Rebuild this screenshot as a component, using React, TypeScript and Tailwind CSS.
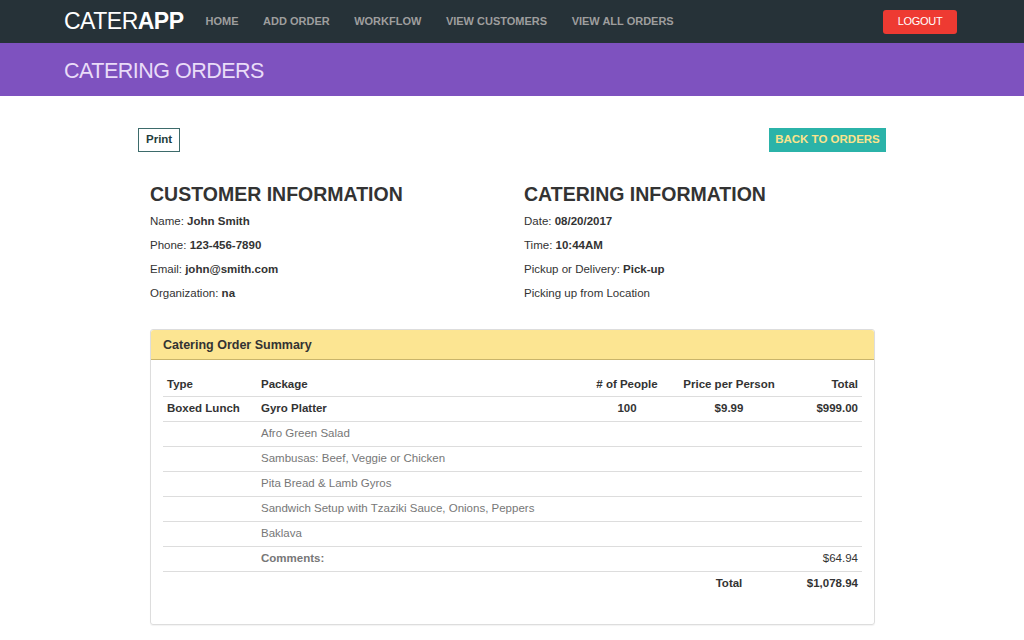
import React from "react";

const items = [
  "Afro Green Salad",
  "Sambusas: Beef, Veggie or Chicken",
  "Pita Bread & Lamb Gyros",
  "Sandwich Setup with Tzaziki Sauce, Onions, Peppers",
  "Baklava",
];

export default function App() {
  return (
    <div className="min-h-[640px] bg-white text-[#333333]" style={{ fontFamily: '"Liberation Sans", Arial, sans-serif' }}>
      <nav className="h-[43px] bg-[#263238] flex items-center pl-[64px] pr-[67px]">
        <div className="text-[23px] leading-none text-white tracking-[-0.5px]">
          <span className="font-normal">CATER</span><span className="font-bold">APP</span>
        </div>
        <div className="flex items-center ml-[22px] gap-[24.5px] text-[11px] font-bold text-[#9e9e9e]">
          <span>HOME</span>
          <span>ADD ORDER</span>
          <span>WORKFLOW</span>
          <span>VIEW CUSTOMERS</span>
          <span>VIEW ALL ORDERS</span>
        </div>
        <button className="ml-auto w-[74px] h-[24px] rounded-[3px] bg-[#ee3a32] text-white text-[11px] tracking-[-0.3px]">LOGOUT</button>
      </nav>
      <div className="h-[53px] bg-[#7e52bf] flex items-center pl-[64px]">
        <h1 className="text-[21.5px] text-[#e9dcf8] tracking-[-0.5px] pt-[4px]" style={{ fontWeight: 300 }}>CATERING ORDERS</h1>
      </div>
      <div className="w-[748px] mx-auto pt-[32px]">
        <div className="flex justify-between items-center">
          <button className="h-[24px] px-[7px] border border-[#3d6b6b] text-[11.5px] font-bold text-[#1f3d3d]">Print</button>
          <button className="h-[24px] w-[117px] bg-[#2bb3a9] text-[11.5px] font-bold text-[#fbe38c]">BACK TO ORDERS</button>
        </div>
        <div className="px-[12px]">
          <div className="grid grid-cols-[374px_1fr] mt-[30px] text-[11.5px]">
            <div>
              <h2 className="text-[19.5px] font-bold leading-[24px] text-[#333]">CUSTOMER INFORMATION</h2>
              <p className="mt-[8px] leading-[14px]">Name: <b>John Smith</b></p>
              <p className="mt-[10px] leading-[14px]">Phone: <b>123-456-7890</b></p>
              <p className="mt-[10px] leading-[14px]">Email: <b>john@smith.com</b></p>
              <p className="mt-[10px] leading-[14px]">Organization: <b>na</b></p>
            </div>
            <div>
              <h2 className="text-[19.5px] font-bold leading-[24px] text-[#333]">CATERING INFORMATION</h2>
              <p className="mt-[8px] leading-[14px]">Date: <b>08/20/2017</b></p>
              <p className="mt-[10px] leading-[14px]">Time: <b>10:44AM</b></p>
              <p className="mt-[10px] leading-[14px]">Pickup or Delivery: <b>Pick-up</b></p>
              <p className="mt-[10px] leading-[14px]">Picking up from Location</p>
            </div>
          </div>
          <div className="mt-[29px] w-[725px] border border-[#dddddd] rounded-[3px] shadow-[0_1px_1px_rgba(0,0,0,0.05)]">
            <div className="h-[30px] bg-[#fce592] border-b border-[#c9b46a] flex items-center px-[12px] rounded-t-[3px]">
              <span className="text-[12.5px] font-bold text-[#333] pt-[1px]">Catering Order Summary</span>
            </div>
            <div className="px-[12px] pt-[12px] pb-[28px]">
              <table className="w-[699px] table-fixed text-[11.5px] border-collapse">
                <colgroup>
                  <col className="w-[94px]" />
                  <col className="w-[330px]" />
                  <col className="w-[80px]" />
                  <col className="w-[124px]" />
                  <col className="w-[71px]" />
                </colgroup>
                <thead>
                  <tr className="h-[24px]">
                    <th className="text-left font-bold pl-[4px] align-bottom pb-[2px]">Type</th>
                    <th className="text-left font-bold pl-[4px] align-bottom pb-[2px]">Package</th>
                    <th className="text-center font-bold align-bottom pb-[2px] whitespace-nowrap"># of People</th>
                    <th className="text-center font-bold whitespace-nowrap align-bottom pb-[2px]">Price per Person</th>
                    <th className="text-right font-bold pr-[4px] align-bottom pb-[2px]">Total</th>
                  </tr>
                </thead>
                <tbody>
                  <tr className="h-[25px] border-t border-[#dddddd] font-bold">
                    <td className="pl-[4px] whitespace-nowrap">Boxed Lunch</td>
                    <td className="pl-[4px]">Gyro Platter</td>
                    <td className="text-center">100</td>
                    <td className="text-center">$9.99</td>
                    <td className="text-right pr-[4px]">$999.00</td>
                  </tr>
                  {items.map((it) => (
                    <tr key={it} className="h-[25px] border-t border-[#dddddd] text-[#777777]">
                      <td></td>
                      <td className="pl-[4px] whitespace-nowrap">{it}</td>
                      <td></td>
                      <td></td>
                      <td></td>
                    </tr>
                  ))}
                  <tr className="h-[25px] border-t border-[#dddddd]">
                    <td></td>
                    <td className="pl-[4px] font-bold text-[#777777]">Comments:</td>
                    <td></td>
                    <td></td>
                    <td className="text-right pr-[4px]">$64.94</td>
                  </tr>
                  <tr className="h-[25px] border-t border-[#dddddd] font-bold">
                    <td></td>
                    <td></td>
                    <td></td>
                    <td className="text-center">Total</td>
                    <td className="text-right pr-[4px]">$1,078.94</td>
                  </tr>
                </tbody>
              </table>
            </div>
          </div>
        </div>
      </div>
    </div>
  );
}
